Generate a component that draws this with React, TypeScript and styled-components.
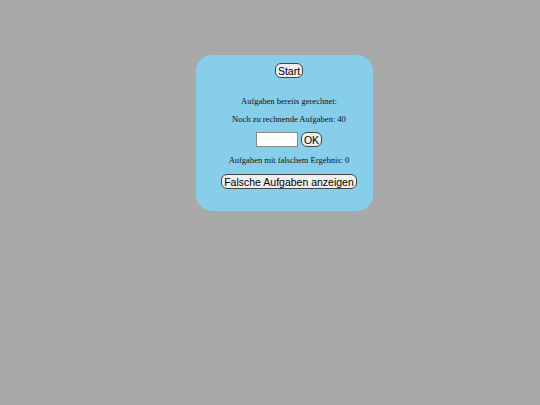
import React from "react";
import styled, { createGlobalStyle } from "styled-components";

const Global = createGlobalStyle`
  html, body { margin: 0; padding: 0; background: #a9a9a9; }
  body { width: 540px; height: 405px; overflow: hidden; font-family: "Liberation Serif", "Times New Roman", serif; }
`;

const Page = styled.div`
  padding: 55px 0 0 196px;
`;

const Card = styled.div`
  width: 177px;
  height: 156px;
  box-sizing: border-box;
  background: #87ceeb;
  border-radius: 16px;
  padding: 8px 0 0 9px;
  display: flex;
  flex-direction: column;
  align-items: center;
`;

const Button = styled.button<{ $mt?: number }>`
  font-family: "Liberation Sans", Arial, sans-serif;
  font-size: 10.5px;
  line-height: 12px;
  color: #000;
  background: #efefef;
  border: 1px solid #444;
  border-radius: 6px;
  padding: 0 2px;
  height: 15px;
  margin: ${(p) => p.$mt ?? 0}px 0 0 0;
  cursor: pointer;
`;

const Line = styled.p<{ $mt: number }>`
  margin: ${(p) => p.$mt}px 0 0 0;
  font-size: 8.5px;
  line-height: 10px;
  color: #111;
`;

const Row = styled.div`
  display: flex;
  align-items: center;
  gap: 3px;
  margin-top: 8px;
`;

const Input = styled.input`
  width: 42px;
  height: 15px;
  box-sizing: border-box;
  border: 1px solid #888;
  background: #fff;
  padding: 0;
  margin: 0;
`;

export default function App() {
  return (
    <>
      <Global />
      <Page>
        <Card>
          <Button>Start</Button>
          <Line $mt={18}>Aufgaben bereits gerechnet:</Line>
          <Line $mt={8}>Noch zu rechnende Aufgaben: 40</Line>
          <Row>
            <Input type="text" />
            <Button>OK</Button>
          </Row>
          <Line $mt={8}>Aufgaben mit falschem Ergebnis: 0</Line>
          <Button $mt={9}>Falsche Aufgaben anzeigen</Button>
        </Card>
      </Page>
    </>
  );
}
